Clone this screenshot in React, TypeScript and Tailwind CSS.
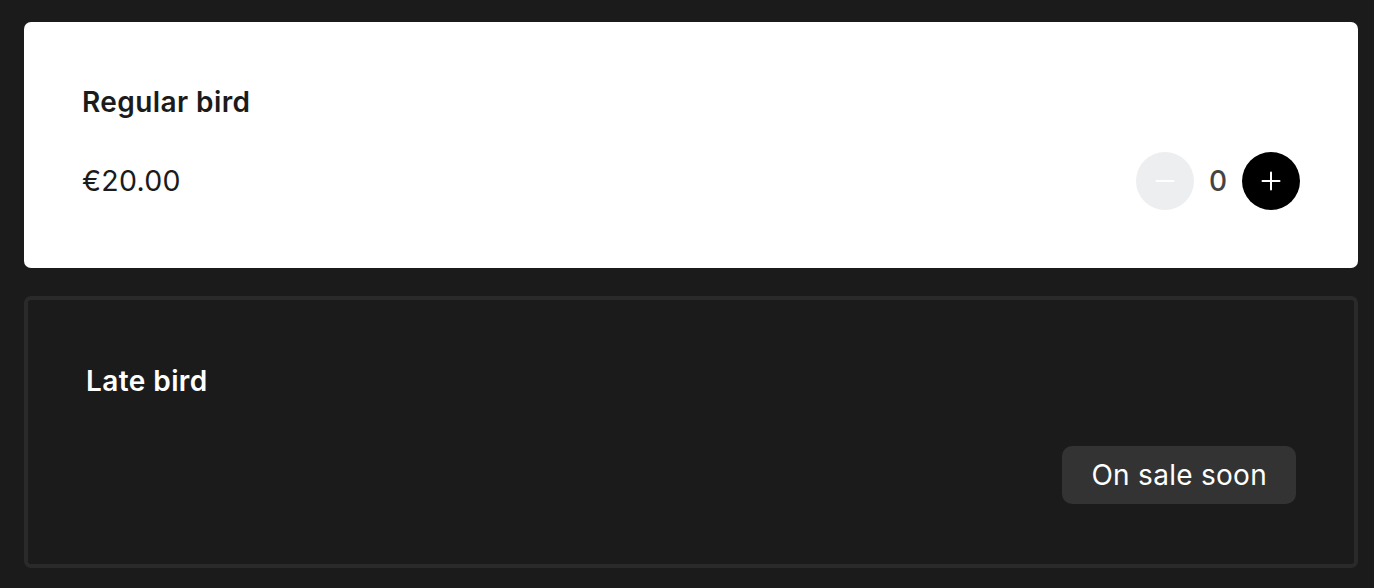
import React from "react";

export default function App() {
  return (
    <div
      className="min-h-[588px] w-full bg-[#1b1b1b] pl-[24px] pr-[16px] py-[22px] flex flex-col gap-[28px]"
      style={{ fontFamily: "Inter, 'Noto Sans', sans-serif" }}
    >
      <div className="bg-white rounded-[7px] px-[58px] pt-[58px] pb-[58px] flex flex-col">
        <div className="text-[28px] leading-[44px] font-semibold text-[#1b1b1b] tracking-[0.015em]">Regular bird</div>
        <div className="mt-[28px] flex items-center justify-between h-[58px]">
          <div className="text-[28.5px] text-[#1b1b1b] tracking-[0.01em]">€20.00</div>
          <div className="flex items-center gap-[14px]">
            <button className="w-[58px] h-[58px] rounded-full bg-[#edeef0] flex items-center justify-center">
              <svg width="20" height="20" viewBox="0 0 20 20"><path d="M1.5 10h17" stroke="#ffffff" strokeWidth="2" strokeLinecap="round" /></svg>
            </button>
            <span className="text-[28px] font-medium text-[#444444] w-[20px] text-center">0</span>
            <button className="w-[58px] h-[58px] rounded-full bg-black flex items-center justify-center">
              <svg width="20" height="20" viewBox="0 0 20 20"><path d="M1.5 10h17M10 1.5v17" stroke="#ffffff" strokeWidth="2" strokeLinecap="round" /></svg>
            </button>
          </div>
        </div>
      </div>
      <div className="border-[4px] border-[#2a2a2a] rounded-[7px] px-[58px] pt-[59px] pb-[60px] flex flex-col">
        <div className="text-[28px] leading-[44px] font-semibold text-white tracking-[0.015em]">Late bird</div>
        <div className="mt-[43px] flex justify-end">
          <div className="h-[58px] px-[29px] rounded-[10px] bg-[#333333] flex items-center text-[28px] text-white tracking-[0.01em]">
            On sale soon
          </div>
        </div>
      </div>
    </div>
  );
}
